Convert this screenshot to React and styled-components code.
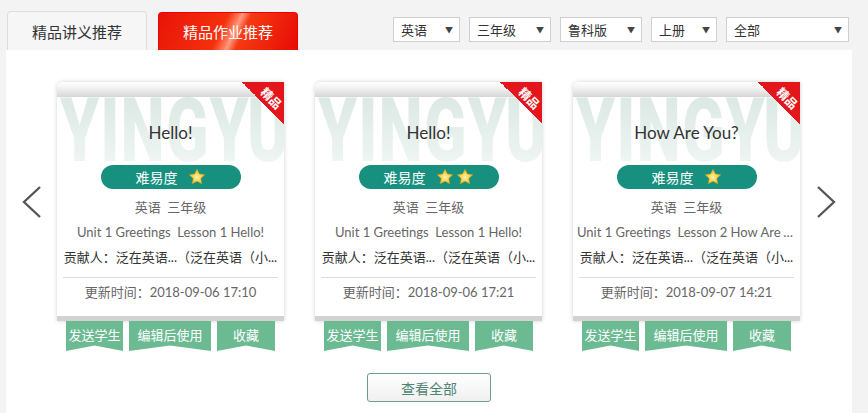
import React from 'react'
import styled, {createGlobalStyle} from 'styled-components'

const Global = createGlobalStyle`
    body{
        margin:0;
        background:#f3f3f3;
        font-family: Lato, "Noto Sans CJK SC", sans-serif;
        color:#333;
    }
`

const Page = styled.div`
    width:868px;
    height:413px;
    overflow:hidden;
`

const Header = styled.div`
    height:50px;
    display:flex;
    align-items:flex-end;
    padding-left:7px;
    gap:11px;
    position:relative;
`

const Tab = styled.div`
    width:140px;
    height:${p => p.active ? '38px' : '39px'};
    box-sizing:border-box;
    border-radius:4px 4px 0 0;
    display:flex;
    align-items:center;
    justify-content:center;
    font-size:15px;
    font-family:"Noto Sans CJK SC", sans-serif;
    color:${p => p.active ? '#fff' : '#333'};
    background:${p => p.active
        ? 'linear-gradient(115deg, #e81408 0%, #f5300c 45%, #ff7a5a 52%, #ff9b80 54%, #f63a12 60%, #e80a06 100%)'
        : '#f6f6f6'};
    border:1px solid ${p => p.active ? '#e00' : '#dedede'};
    border-bottom:none;
`

const Filters = styled.div`
    position:absolute;
    top:17px;
    left:393px;
    display:flex;
    gap:9px;
`

const Select = styled.div`
    width:${p => p.w}px;
    height:25px;
    box-sizing:border-box;
    border:1px solid #cfcfcf;
    background:#fff;
    display:flex;
    align-items:center;
    justify-content:space-between;
    padding:0 6px 0 7px;
    font-size:13px;
    font-family:"Noto Sans CJK SC", sans-serif;
    color:#333;

    span{
        font-size:8px;
        color:#444;
    }
`

const Panel = styled.div`
    margin-left:6px;
    width:846px;
    height:363px;
    background:#fff;
    padding-top:32px;
    box-sizing:border-box;
    display:flex;
    flex-direction:column;
    align-items:center;
`

const Carousel = styled.div`
    display:flex;
    align-items:flex-start;
    width:100%;
`

const ArrowZone = styled.div`
    width:51px;
    height:240px;
    display:flex;
    align-items:center;
    justify-content:center;
    flex-shrink:0;
`

const Cards = styled.div`
    display:flex;
    gap:31px;
`

const Column = styled.div`
    width:227px;
    display:flex;
    flex-direction:column;
    align-items:center;
`

const Card = styled.div`
    position:relative;
    width:100%;
    height:239px;
    box-sizing:border-box;
    background:#fff;
    border-radius:6px 0 0 0;
    box-shadow:0 0 4px rgba(0,0,0,.18);
    border-bottom:5px solid #d2d2d2;
    overflow:hidden;
    display:flex;
    flex-direction:column;
    align-items:center;
`

const TopBand = styled.div`
    position:relative;
    z-index:1;
    width:100%;
    height:15px;
    flex-shrink:0;
    background:linear-gradient(#ffffff, #f2f2f2 40%, #d6d6d6);
`

const Watermark = styled.div`
    position:absolute;
    top:4px;
    left:3px;
    transform-origin:left top;
    transform:scaleX(0.7);
    font-family:Roboto, sans-serif;
    font-weight:900;
    font-size:89px;
    letter-spacing:2px;
    line-height:1;
    white-space:nowrap;
    background:linear-gradient(#d9e6e1, #e6f0ec 55%, #f2f7f5);
    -webkit-background-clip:text;
    background-clip:text;
    color:transparent;
    pointer-events:none;
`

const Corner = styled.div`
    position:absolute;
    z-index:2;
    top:0;
    right:0;
    width:42px;
    height:42px;
    background:linear-gradient(45deg, transparent 50%, #e3161c 50%);

    span{
        position:absolute;
        top:7px;
        right:0px;
        transform:rotate(45deg);
        color:#fff;
        font-size:12px;
        font-weight:700;
        font-family:"Noto Sans CJK SC", sans-serif;
    }
`

const Title = styled.div`
    position:relative;
    margin-top:24px;
    height:24px;
    line-height:24px;
    font-size:17px;
    color:#333;
`

const Difficulty = styled.div`
    position:relative;
    margin-top:20px;
    width:140px;
    height:24px;
    border-radius:12px;
    background:#17907f;
    display:flex;
    align-items:center;
    justify-content:center;
    gap:2px;
    color:#fff;
    font-size:14px;
    font-family:"Noto Sans CJK SC", sans-serif;

    b{
        font-weight:400;
        margin-right:8px;
    }
`

const Info = styled.div`
    margin-top:${p => p.first ? '6px' : '0'};
    width:100%;
    padding:0 4px;
    box-sizing:border-box;
    height:25px;
    line-height:25px;
    text-align:center;
    font-size:13px;
    color:${p => p.dark ? '#333' : '#666'};
    white-space:pre;
    overflow:hidden;
    text-overflow:ellipsis;
`

const Divider = styled.div`
    width:215px;
    height:1px;
    background:#dcdcdc;
    margin:7px 0 2px;
`

const Actions = styled.div`
    display:flex;
    gap:6px;
`

const Action = styled.div`
    width:${p => p.w}px;
    height:30px;
    background:#6bba92;
    color:#fff;
    font-size:13px;
    font-family:"Noto Sans CJK SC", sans-serif;
    display:flex;
    align-items:center;
    justify-content:center;
    padding-bottom:3px;
    box-sizing:border-box;
    clip-path:polygon(0 0, 100% 0, 100% 100%, 50% 82%, 0 100%);
`

const MoreButton = styled.div`
    margin-top:22px;
    width:124px;
    height:29px;
    box-sizing:border-box;
    border:1px solid #6f9c8c;
    border-radius:3px;
    background:linear-gradient(#ffffff, #f0f0f0);
    display:flex;
    align-items:center;
    justify-content:center;
    font-size:14px;
    color:#4d8473;
    font-family:"Noto Sans CJK SC", sans-serif;
`

const Chevron = ({right}) => (
    <svg width="22" height="34" viewBox="0 0 22 34">
        <polyline points={right ? '3,2 19,17 3,32' : '19,2 3,17 19,32'}
            fill="none" stroke="#555" strokeWidth="2.3" strokeLinejoin="miter"/>
    </svg>
)

const Star = () => (
    <svg width="18" height="18" viewBox="0 0 24 24">
        <defs>
            <radialGradient id="sg" cx="50%" cy="55%" r="55%">
                <stop offset="0%" stopColor="#fff3b0"/>
                <stop offset="60%" stopColor="#f7cf3e"/>
                <stop offset="100%" stopColor="#e9a71d"/>
            </radialGradient>
        </defs>
        <path d="M12 1.5l3.1 6.6 7.2.9-5.3 5 1.4 7.1L12 17.6l-6.4 3.5 1.4-7.1-5.3-5 7.2-.9z"
            fill="url(#sg)" stroke="#e2a31a" strokeWidth=".6" strokeLinejoin="round"/>
    </svg>
)

const cards = [
    {title:'Hello!', stars:1, lesson:'Unit 1 Greetings  Lesson 1 Hello!', time:'2018-09-06 17:10'},
    {title:'Hello!', stars:2, lesson:'Unit 1 Greetings  Lesson 1 Hello!', time:'2018-09-06 17:21'},
    {title:'How Are You?', stars:1, lesson:'Unit 1 Greetings  Lesson 2 How Are You?', time:'2018-09-07 14:21'},
]

const filters = [
    {label:'英语', w:67},
    {label:'三年级', w:82},
    {label:'鲁科版', w:82},
    {label:'上册', w:66},
    {label:'全部', w:123},
]

const App = () => {
    return(
        <>
            <Global/>
            <Page>
                <Header>
                    <Tab>精品讲义推荐</Tab>
                    <Tab active>精品作业推荐</Tab>
                    <Filters>
                        {filters.map(f => (
                            <Select key={f.label} w={f.w}>{f.label}<span>▼</span></Select>
                        ))}
                    </Filters>
                </Header>
                <Panel>
                    <Carousel>
                        <ArrowZone><Chevron/></ArrowZone>
                        <Cards>
                            {cards.map((c, i) => (
                                <Column key={i}>
                                    <Card>
                                        <TopBand/>
                                        <Watermark>YINGYU</Watermark>
                                        <Corner><span>精品</span></Corner>
                                        <Title>{c.title}</Title>
                                        <Difficulty>
                                            <b>难易度</b>
                                            {Array.from({length:c.stars}).map((_, k) => <Star key={k}/>)}
                                        </Difficulty>
                                        <Info first>英语  三年级</Info>
                                        <Info>{c.lesson}</Info>
                                        <Info dark>贡献人：泛在英语...（泛在英语（小...</Info>
                                        <Divider/>
                                        <Info>更新时间：{c.time}</Info>
                                    </Card>
                                    <Actions>
                                        <Action w={57}>发送学生</Action>
                                        <Action w={82}>编辑后使用</Action>
                                        <Action w={58}>收藏</Action>
                                    </Actions>
                                </Column>
                            ))}
                        </Cards>
                        <ArrowZone><Chevron right/></ArrowZone>
                    </Carousel>
                    <MoreButton>查看全部</MoreButton>
                </Panel>
            </Page>
        </>
    )
}

export default App
